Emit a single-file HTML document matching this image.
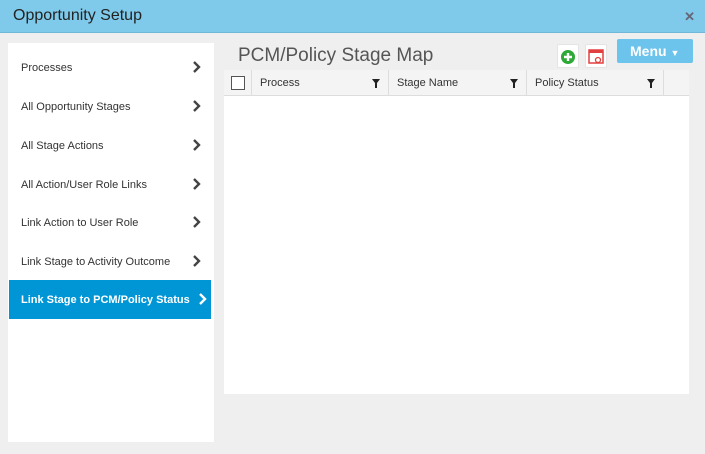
<!DOCTYPE html>
<html><head><style>
*{margin:0;padding:0;box-sizing:border-box}
body{width:705px;height:454px;background:#efefef;font-family:"Liberation Sans",sans-serif;position:relative;overflow:hidden}
.hdr{position:absolute;left:0;top:0;width:705px;height:33px;background:#7fc9ea;border-bottom:1px solid #6fb8d9}
.hdr .t{position:absolute;left:13px;top:7px;font-size:16px;color:#222}
.hdr .x{position:absolute;right:10px;top:9px;font-size:13px;color:#667;font-weight:bold}
.left{position:absolute;left:8px;top:43px;width:206px;height:399px;background:#fff}
.it{position:absolute;left:1px;width:202px;height:39px;font-size:11px;color:#333;padding-left:12px;line-height:41px}
.it svg{position:absolute;right:10px;top:13px}
.it.a{background:#0096d6;color:#fff;font-weight:bold}
.title{position:absolute;left:238px;top:45px;font-size:19px;color:#555}
.tbl{position:absolute;left:224px;top:70px;width:465px;height:324px;background:#fff}
.th{position:absolute;top:0;height:26px;background:#f4f4f4;border-bottom:1px solid #ddd;width:465px}
.c{position:absolute;top:0;height:26px;border-right:1px solid #ddd;font-size:11px;color:#333;line-height:27px;padding-left:8px}
.f{position:absolute;right:8px;top:9px}
.menu{position:absolute;left:617px;top:39px;width:76px;height:24px;background:#6cc3ec;border-radius:2px;color:#fff;font-size:14px;font-weight:bold;line-height:24px;padding-left:13px}
.btn{position:absolute;top:44px;width:22px;height:24px;background:#fff;border:1px solid #e4e4e4;border-radius:2px}
</style></head><body>
<div class="hdr"><div class="t">Opportunity Setup</div><div class="x">✕</div></div>
<div class="left">
<div class="it" style="top:5px">Processes<svg width="8" height="12"><path d="M1 1l5 5-5 5" stroke="#444" stroke-width="2.4" fill="none"/></svg></div>
<div class="it" style="top:44px">All Opportunity Stages<svg width="8" height="12"><path d="M1 1l5 5-5 5" stroke="#444" stroke-width="2.4" fill="none"/></svg></div>
<div class="it" style="top:83px">All Stage Actions<svg width="8" height="12"><path d="M1 1l5 5-5 5" stroke="#444" stroke-width="2.4" fill="none"/></svg></div>
<div class="it" style="top:122px">All Action/User Role Links<svg width="8" height="12"><path d="M1 1l5 5-5 5" stroke="#444" stroke-width="2.4" fill="none"/></svg></div>
<div class="it" style="top:160px">Link Action to User Role<svg width="8" height="12"><path d="M1 1l5 5-5 5" stroke="#444" stroke-width="2.4" fill="none"/></svg></div>
<div class="it" style="top:199px">Link Stage to Activity Outcome<svg width="8" height="12"><path d="M1 1l5 5-5 5" stroke="#444" stroke-width="2.4" fill="none"/></svg></div>
<div class="it a" style="top:237px">Link Stage to PCM/Policy Status<svg width="8" height="12" style="right:4px"><path d="M1 1l5 5-5 5" stroke="#fff" stroke-width="2.4" fill="none"/></svg></div>
</div>
<div class="title">PCM/Policy Stage Map</div>
<div class="btn" style="left:557px"><svg width="20" height="22"><circle cx="10" cy="12" r="7" fill="#2ea836"/><path d="M10 8v8M6 12h8" stroke="#fff" stroke-width="2.4"/></svg></div>
<div class="btn" style="left:585px"><svg width="20" height="22"><rect x="3" y="5" width="14" height="13" fill="#fff" stroke="#e04040" stroke-width="1.5"/><rect x="3" y="5" width="14" height="3" fill="#e04040"/><circle cx="12" cy="15" r="2.5" fill="none" stroke="#e04040" stroke-width="1.3"/></svg></div>
<div class="menu">Menu <span style="font-size:9px">▼</span></div>
<div class="tbl">
<div class="th">
<div class="c" style="left:0;width:28px"><div style="position:absolute;left:7px;top:6px;width:14px;height:14px;border:1px solid #555;background:#fff"></div></div>
<div class="c" style="left:28px;width:137px">Process<svg class="f" width="8" height="9"><path d="M0 0h8L5 4v5H3V4z" fill="#222"/></svg></div>
<div class="c" style="left:165px;width:138px">Stage Name<svg class="f" width="8" height="9"><path d="M0 0h8L5 4v5H3V4z" fill="#222"/></svg></div>
<div class="c" style="left:303px;width:137px">Policy Status<svg class="f" width="8" height="9"><path d="M0 0h8L5 4v5H3V4z" fill="#222"/></svg></div>
</div></div>
</body></html>
